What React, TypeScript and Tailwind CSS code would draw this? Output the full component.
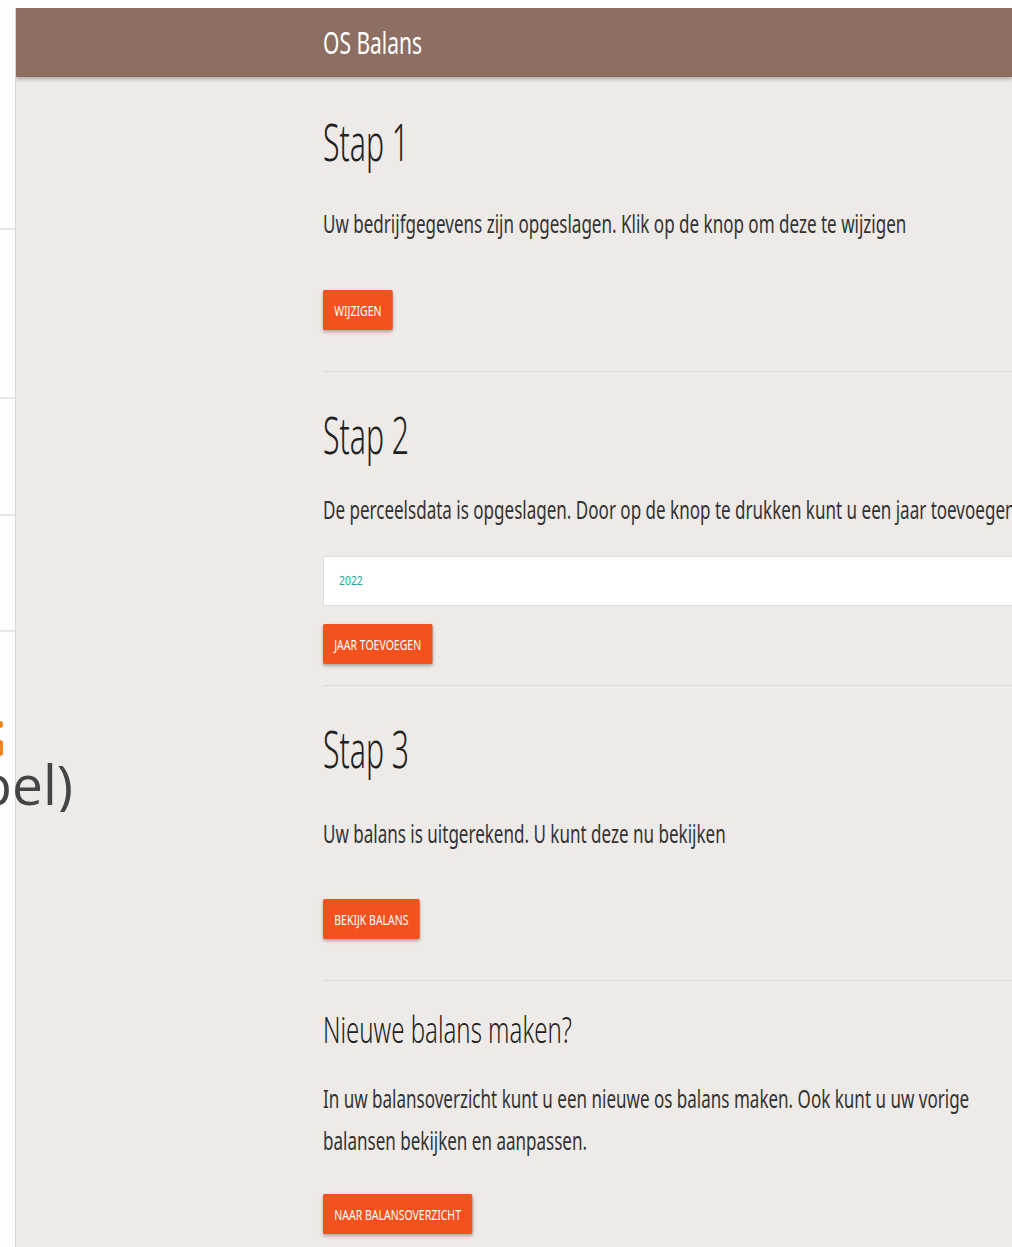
import React from 'react';

const sans = "font-['Noto_Sans','Open_Sans',sans-serif]";

const Button = ({ label }: { label: string }) => (
  <button
    className={`${sans} h-10 px-[15px] bg-[#f4511e] text-white text-[14px] uppercase rounded-[2px] shadow-[0_2px_4px_rgba(0,0,0,0.3)] origin-left scale-x-[0.75] whitespace-nowrap`}
  >
    {label}
  </button>
);

const Para = ({ children, className = '' }: { children: React.ReactNode; className?: string }) => (
  <p
    className={`${sans} text-[26px] leading-[42px] text-[#333] whitespace-nowrap origin-left scale-x-[0.655] ${className}`}
  >
    {children}
  </p>
);

const Heading = ({ children, className = '' }: { children: React.ReactNode; className?: string }) => (
  <h2
    className={`${sans} font-light text-[52px] leading-[60px] text-[#212121] whitespace-nowrap origin-left scale-x-[0.58] ${className}`}
  >
    {children}
  </h2>
);

export default function App() {
  return (
    <div className="relative h-[1247px] overflow-hidden bg-[#fdfcfe]">
      {/* page underneath the panel */}
      <div className="flex flex-col pt-[228px]">
        <div className="h-[169px] border-t-2 border-[#e6e6e6]" />
        <div className="h-[117px] border-t-2 border-[#e6e6e6]" />
        <div className="h-[116px] border-t-2 border-[#e6e6e6]" />
        <div className="h-[91px] border-t-2 border-[#e6e6e6]" />
        {/* tail of an orange glyph, cut by the viewport */}
        <div className="relative z-10 flex flex-col gap-[12px] w-[3px]">
          <span className="h-[7px] rounded-r-full bg-[#f5821f]" />
          <span className="h-[16px] rounded-r-full bg-[#f5821f]" />
        </div>
        <div className="relative z-10 w-[73px] overflow-hidden flex justify-end">
          <span className="font-['Open_Sans',sans-serif] text-[55px] leading-[56px] text-[#444] whitespace-nowrap">
            (tabel)
          </span>
        </div>
      </div>

      {/* OS Balans panel */}
      <div className="absolute left-[15px] top-2 right-0 bottom-0 bg-[#eeeae7] border-l border-[#d9d9d9] overflow-hidden">
        <header className="h-[69px] bg-[#8d6e63] shadow-[0_2px_4px_rgba(0,0,0,0.3)] flex items-center pl-[307px]">
          <span className={`${sans} text-white text-[30px] origin-left scale-x-[0.7]`}>OS Balans</span>
        </header>

        <div className="pl-[307px] w-[1100px]">
          <section className="border-b border-[#dedad7]">
            <Heading className="pt-[34px]">Stap 1</Heading>
            <Para className="mt-[31px]">Uw bedrijfgegevens zijn opgeslagen. Klik op de knop om deze te wijzigen</Para>
            <div className="pt-[46px] pb-[41px]">
              <Button label="Wijzigen" />
            </div>
          </section>

          <section className="border-b border-[#dedad7]">
            <Heading className="pt-[32px]">Stap 2</Heading>
            <Para className="mt-[24px]">
              De perceelsdata is opgeslagen. Door op de knop te drukken kunt u een jaar toevoegen
            </Para>
            <div className="mt-[26px] h-[50px] bg-white border border-[#e0dcd9] flex items-center pl-[15px]">
              <span className={`${sans} text-[13px] text-[#26a69a] origin-left scale-x-[0.8]`}>2022</span>
            </div>
            <div className="pt-[18px] pb-[21px]">
              <Button label="Jaar toevoegen" />
            </div>
          </section>

          <section className="border-b border-[#dedad7]">
            <Heading className="pt-[32px]">Stap 3</Heading>
            <Para className="mt-[34px]">Uw balans is uitgerekend. U kunt deze nu bekijken</Para>
            <div className="pt-[45px] pb-[41px]">
              <Button label="Bekijk balans" />
            </div>
          </section>

          <section>
            <h3
              className={`${sans} font-light text-[36px] leading-[44px] text-[#212121] pt-[27px] whitespace-nowrap origin-left scale-x-[0.666]`}
            >
              Nieuwe balans maken?
            </h3>
            <div className="mt-[25px]">
              <Para>In uw balansoverzicht kunt u een nieuwe os balans maken. Ook kunt u uw vorige</Para>
              <Para>balansen bekijken en aanpassen.</Para>
            </div>
            <div className="pt-[33px]">
              <Button label="Naar balansoverzicht" />
            </div>
          </section>
        </div>
      </div>
    </div>
  );
}
